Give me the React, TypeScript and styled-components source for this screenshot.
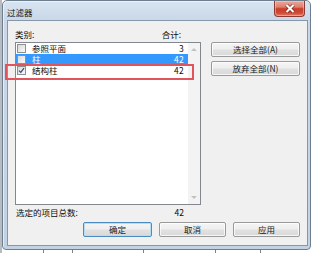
import React from 'react';
import styled, { createGlobalStyle } from 'styled-components';

const GlobalStyle = createGlobalStyle`
  html, body {
    margin: 0;
    padding: 0;
  }
  body {
    width: 312px;
    height: 253px;
    overflow: hidden;
    font-family: "Noto Sans CJK SC", "Noto Sans", sans-serif;
    background:
      linear-gradient(#808080, #808080) 43px 0 / 1px 100% no-repeat,
      linear-gradient(#808080, #808080) 72px 0 / 1px 100% no-repeat,
      linear-gradient(#808080, #808080) 143px 0 / 1px 100% no-repeat,
      linear-gradient(#808080, #808080) 215px 0 / 1px 100% no-repeat,
      linear-gradient(#808080, #808080) 260px 0 / 1px 100% no-repeat,
      linear-gradient(#b7bcc2, #b7bcc2) 0 0 / 2px 100% no-repeat,
      #ffffff;
  }
`;

const Window = styled.div`
  margin-left: 2px;
  width: 309px;
  height: 250px;
  box-sizing: border-box;
  border: 1px solid #6f7e8e;
  border-radius: 5px 5px 4px 4px;
  padding: 0 2px 3px 4px;
  display: flex;
  flex-direction: column;
  background: linear-gradient(180deg, #d8e4f1 0px, #cad8e8 18px, #c2d2e3 100%);
  box-shadow: inset 1px 1px 0 rgba(255, 255, 255, 0.55);
`;

const TitleBar = styled.div`
  height: 19px;
  display: flex;
  align-items: flex-start;
  justify-content: space-between;
`;

const Title = styled.span`
  padding-top: 6px;
  font-size: 8.5px;
  line-height: 10px;
  color: #111;
`;

const CloseButton = styled.div`
  width: 31px;
  height: 16px;
  margin-right: 3px;
  box-sizing: border-box;
  border: 1px solid #8d3a32;
  border-top: none;
  border-radius: 0 0 4px 4px;
  display: flex;
  align-items: center;
  justify-content: center;
  background: linear-gradient(
    180deg,
    #eca898 0%,
    #df8070 40%,
    #c93d2b 52%,
    #cf4935 78%,
    #e07a64 100%
  );
  box-shadow: inset 0 0 0 1px rgba(255, 220, 210, 0.45);
`;

const Client = styled.div`
  height: 226px;
  box-sizing: border-box;
  border: 1px solid #8597ab;
  background: #f0f0f0;
  padding: 8px 7px;
  display: flex;
  flex-direction: column;
  font-size: 8.5px;
  color: #0c0c0c;
`;

const Main = styled.div`
  display: flex;
  gap: 10px;
`;

const LeftColumn = styled.div`
  width: 186px;
  display: flex;
  flex-direction: column;
`;

const RightColumn = styled.div`
  width: 89px;
  padding-top: 13px;
  display: flex;
  flex-direction: column;
  gap: 4px;
`;

const Header = styled.div`
  height: 10px;
  line-height: 10px;
  margin-bottom: 3px;
  padding-right: 20px;
  display: flex;
  justify-content: space-between;
`;

const ListBox = styled.div`
  height: 163px;
  box-sizing: border-box;
  border: 1px solid #828790;
  background: #ffffff;
  display: flex;
`;

const Rows = styled.div`
  flex: 1;
  display: flex;
  flex-direction: column;
`;

const Row = styled.div<{ $selected?: boolean }>`
  position: relative;
  height: 11px;
  line-height: 11px;
  padding: 0 4px 0 1px;
  display: flex;
  align-items: center;
  background: ${(p) => (p.$selected ? '#3399ff' : 'transparent')};
  color: ${(p) => (p.$selected ? '#ffffff' : '#0c0c0c')};
`;

const Check = styled.span`
  width: 9px;
  height: 9px;
  margin-right: 6px;
  box-sizing: border-box;
  border: 1px solid #8e8f8f;
  background: linear-gradient(135deg, #d8d8d8, #f9f9f9);
  display: flex;
  align-items: center;
  justify-content: center;
`;

const Label = styled.span`
  flex: 1;
`;

const Count = styled.span`
  letter-spacing: 0.3px;
`;

const Highlight = styled.div`
  position: absolute;
  left: -11px;
  top: -1px;
  width: 189px;
  height: 16px;
  box-sizing: border-box;
  border: 2px solid #e0545c;
  pointer-events: none;
`;

const ScrollTrack = styled.div`
  width: 12px;
  background: #f3f3f3;
  padding: 5px 0;
  display: flex;
  flex-direction: column;
  justify-content: space-between;
  align-items: center;
`;

const Arrow = styled.span<{ $down?: boolean }>`
  width: 0;
  height: 0;
  border-left: 3px solid transparent;
  border-right: 3px solid transparent;
  ${(p) =>
    p.$down
      ? 'border-top: 3px solid #c2c2c2;'
      : 'border-bottom: 3px solid #c2c2c2;'}
`;

const TotalRow = styled.div`
  width: 186px;
  height: 10px;
  line-height: 10px;
  margin-top: 2px;
  padding: 0 17px 0 1px;
  box-sizing: border-box;
  display: flex;
  justify-content: space-between;
`;

const Footer = styled.div`
  margin-top: 5px;
  display: flex;
  justify-content: flex-end;
  gap: 7px;
`;

const Button = styled.button<{ $width: number; $focused?: boolean }>`
  width: ${(p) => p.$width}px;
  height: 15px;
  padding: 0;
  box-sizing: border-box;
  border: 1px solid ${(p) => (p.$focused ? '#4a8cc2' : '#9a9a9a')};
  border-radius: 2px;
  background: linear-gradient(180deg, #f5f5f5 0%, #eeeeee 48%, #e1e1e1 52%, #d9d9d9 100%);
  box-shadow: inset 0 0 0 1px ${(p) => (p.$focused ? '#b5def5' : 'rgba(255,255,255,0.75)')};
  font-family: "Noto Sans CJK SC", "Noto Sans", sans-serif;
  font-size: 8.5px;
  line-height: 13px;
  color: #1a1a1a;
`;

type Item = { name: string; count: number; checked?: boolean; selected?: boolean; marked?: boolean };

const items: Item[] = [
  { name: '参照平面', count: 3 },
  { name: '柱', count: 42, selected: true },
  { name: '结构柱', count: 42, checked: true, marked: true },
];

const CheckMark = () => (
  <svg width="7" height="7" viewBox="0 0 7 7">
    <path d="M1 3.6 L2.8 5.4 L6 1.2" fill="none" stroke="#2a4a7a" strokeWidth="1.2" />
  </svg>
);

const CloseGlyph = () => (
  <svg width="12" height="9" viewBox="0 0 12 9">
    <path d="M2.5 1 L9.5 8 M9.5 1 L2.5 8" stroke="#5a1810" strokeOpacity="0.7" strokeWidth="3.6" />
    <path d="M2.5 1 L9.5 8 M9.5 1 L2.5 8" stroke="#ffffff" strokeWidth="2.1" />
  </svg>
);

const App = () => {
  return (
    <>
      <GlobalStyle />
      <Window>
        <TitleBar>
          <Title>过滤器</Title>
          <CloseButton>
            <CloseGlyph />
          </CloseButton>
        </TitleBar>
        <Client>
          <Main>
            <LeftColumn>
              <Header>
                <span>类别:</span>
                <span>合计:</span>
              </Header>
              <ListBox>
                <Rows>
                  {items.map((item) => (
                    <Row key={item.name} $selected={item.selected}>
                      <Check>{item.checked && <CheckMark />}</Check>
                      <Label>{item.name}</Label>
                      <Count>{item.count}</Count>
                      {item.marked && <Highlight />}
                    </Row>
                  ))}
                </Rows>
                <ScrollTrack>
                  <Arrow />
                  <Arrow $down />
                </ScrollTrack>
              </ListBox>
            </LeftColumn>
            <RightColumn>
              <Button $width={89}>选择全部(A)</Button>
              <Button $width={89}>放弃全部(N)</Button>
            </RightColumn>
          </Main>
          <TotalRow>
            <span>选定的项目总数:</span>
            <span>42</span>
          </TotalRow>
          <Footer>
            <Button $width={69} $focused>确定</Button>
            <Button $width={67}>取消</Button>
            <Button $width={67}>应用</Button>
          </Footer>
        </Client>
      </Window>
    </>
  );
};

export default App;
